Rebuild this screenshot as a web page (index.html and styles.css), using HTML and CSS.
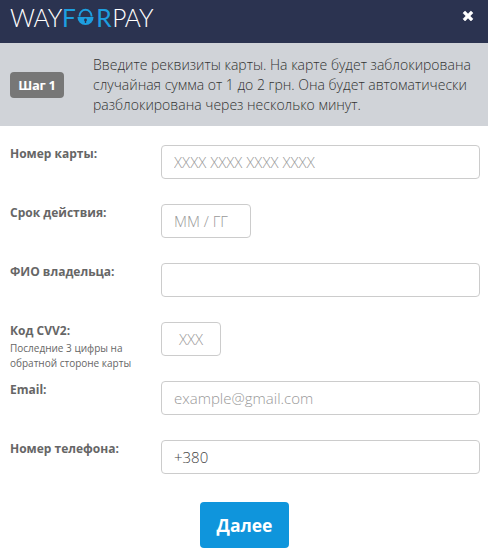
FILE: index.html
```html
<!DOCTYPE html>
<html lang="ru">
<head>
<meta charset="utf-8">
<title>WayForPay</title>
<link rel="stylesheet" href="styles.css">
</head>
<body>
<header class="header">
  <div class="logo">
    <span>WAY</span><span class="logo-blue">F</span><svg class="logo-lock" viewBox="0 0 20 20" aria-hidden="true"><path d="M3.7 9V8.2a6.3 6.3 0 0 1 12.6 0V9" fill="none" stroke="#1d9fe0" stroke-width="2"/><path d="M1.5 9.5h17a8.5 8.5 0 0 1-17 0z" fill="#1d9fe0"/><circle cx="10" cy="12.6" r="1.5" fill="#2b3350"/><rect x="9.3" y="12.8" width="1.4" height="3" fill="#2b3350"/></svg><span class="logo-blue logo-r">R</span><span class="logo-pay">PAY</span>
  </div>
  <svg class="close" viewBox="0 0 12 12" aria-hidden="true"><path d="M1 3.1 3.1 1 6 3.9 8.9 1 11 3.1 8.1 6 11 8.9 8.9 11 6 8.1 3.1 11 1 8.9 3.9 6z" fill="#fff" stroke="#fff" stroke-width=".6" stroke-linejoin="round"/></svg>
</header>
<section class="info">
  <div class="step">Шаг 1</div>
  <p class="info-text">Введите реквизиты карты. На карте будет заблокирована случайная сумма от 1 до 2 грн. Она будет автоматически разблокирована через несколько минут.</p>
</section>
<form class="form">
  <div class="row">
    <label class="label">Номер карты:</label>
    <input class="input" placeholder="XXXX XXXX XXXX XXXX">
  </div>
  <div class="row">
    <label class="label">Срок действия:</label>
    <input class="input input-date" placeholder="MM / ГГ">
  </div>
  <div class="row">
    <label class="label">ФИО владельца:</label>
    <input class="input">
  </div>
  <div class="row">
    <label class="label">Код CVV2:<small class="hint">Последние 3 цифры на обратной стороне карты</small></label>
    <input class="input input-cvv" placeholder="XXX">
  </div>
  <div class="row">
    <label class="label">Email:</label>
    <input class="input" placeholder="example@gmail.com">
  </div>
  <div class="row">
    <label class="label">Номер телефона:</label>
    <input class="input" value="+380">
  </div>
  <div class="actions">
    <button class="submit" type="button">Далее</button>
  </div>
</form>
</body>
</html>
```

FILE: styles.css
```css
* { box-sizing: border-box; }
html, body { margin: 0; padding: 0; background: #fff; }
body { width: 488px; height: 553px; overflow: hidden; font-family: "Open Sans", sans-serif; color: #555; }

.header {
  height: 43px;
  background: #2b3350;
  display: flex;
  align-items: flex-start;
  justify-content: space-between;
  padding: 0 14px 0 10px;
}
.logo {
  display: flex;
  align-items: center;
  height: 35px;
  font-family: "Lato", sans-serif;
  font-weight: 300;
  font-size: 24.5px;
  letter-spacing: -0.4px;
  color: #fff;
}
.logo-blue { color: #1d9fe0; font-weight: 400; }
.logo-lock { width: 19px; height: 19px; margin: -1px 0 0 1px; }
.logo-r { margin-left: 1px; }
.logo-pay { margin-left: 1px; }
.close { width: 12px; height: 12px; margin-top: 10px; }

.info {
  height: 83px;
  background: #d0d3d8;
  display: flex;
  align-items: center;
  padding: 0 10px;
}
.step {
  width: 54px;
  height: 26px;
  flex: none;
  border-radius: 4px;
  background: #777;
  color: #fff;
  font-weight: 700;
  font-size: 13px;
  line-height: 26px;
  text-align: center;
  letter-spacing: -0.3px;
}
.info-text {
  margin: 0 0 0 29px;
  font-weight: 300;
  font-size: 14px;
  line-height: 20px;
  color: #333;
}

.form { padding: 19px 8px 0 10px; }
.row { display: flex; height: 59px; align-items: flex-start; }
.label {
  width: 151px;
  flex: none;
  padding-top: 1px;
  font-weight: 700;
  font-size: 12px;
  line-height: 16px;
  color: #666;
}
.hint {
  display: block;
  font-weight: 400;
  font-size: 10px;
  line-height: 15px;
  margin-top: 2px;
  color: #666;
}
.input {
  width: 319px;
  height: 34px;
  padding: 0 12px;
  border: 1px solid #ccc;
  border-radius: 4px;
  background: #fff;
  font-family: "Open Sans", sans-serif;
  font-weight: 300;
  font-size: 15px;
  color: #444;
  outline: none;
}
.input::placeholder { color: #999; opacity: 1; }
.input-date { width: 90px; }
.input-cvv { width: 60px; padding: 0; text-align: center; }

.actions { display: flex; padding: 3px 0 0 190px; }
.submit {
  width: 89px;
  height: 46px;
  border: 0;
  border-radius: 4px;
  background: #0f95dc;
  color: #fff;
  font-family: "Open Sans", sans-serif;
  font-weight: 700;
  font-size: 17.5px;
}
```
